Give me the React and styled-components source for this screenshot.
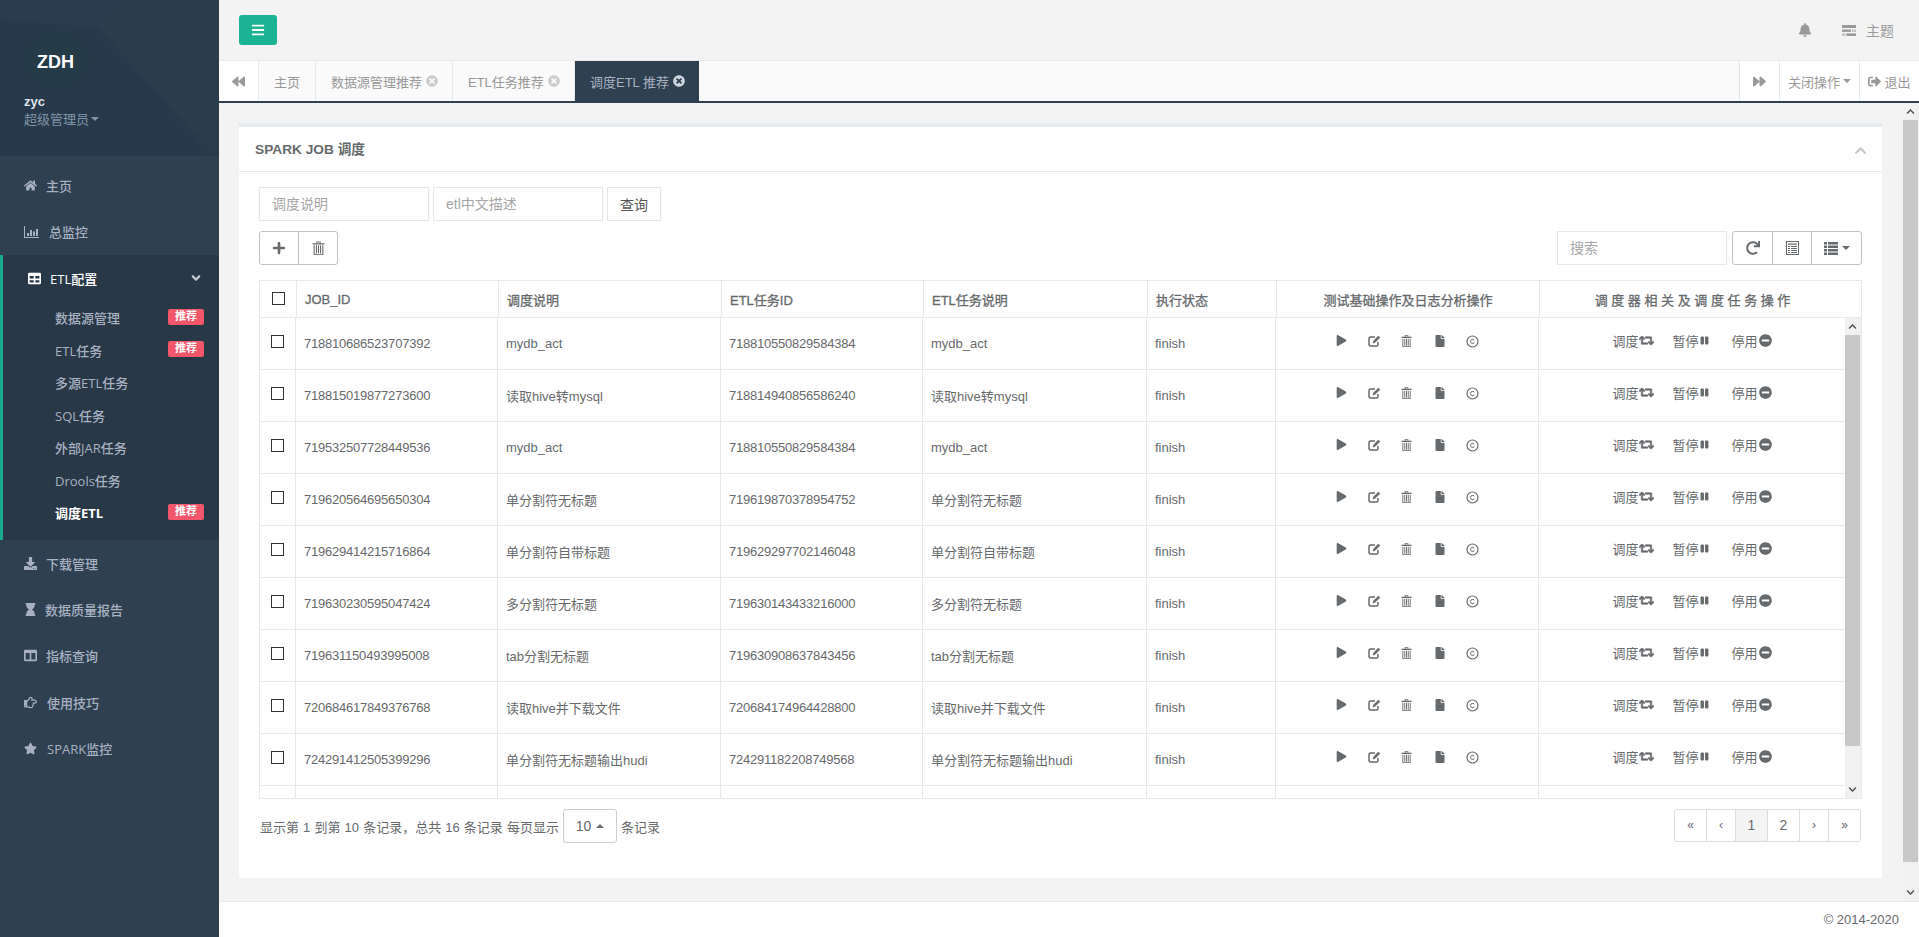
import React from "react";
import styled, { createGlobalStyle } from "styled-components";
import {
  FaBars, FaBackward, FaForward, FaTimesCircle, FaSignOutAlt, FaChevronUp, FaChevronDown, FaPlus, FaRedo,
  FaPlay, FaFile, FaRetweet, FaPause, FaMinusCircle, FaHome, FaTable,
  FaAngleDown, FaDownload, FaHourglass, FaColumns, FaRegHandPointRight, FaStar, FaBell,
} from "react-icons/fa";

const SANS = '"Liberation Sans","Noto Sans CJK SC",sans-serif';
const NAV = '"Open Sans","Noto Sans CJK SC",sans-serif';

const Global = createGlobalStyle`
  html, body { margin: 0; padding: 0; height: 100%; overflow: hidden; }
  body { font-family: ${SANS}; font-size: 13px; color: #676a6c; background: #f3f3f4; }
  * { box-sizing: border-box; }
`;

const Page = styled.div`display: flex; height: 100vh; width: 100vw; overflow: hidden;`;

const Sidebar = styled.nav`
  width: 219px; flex: none; background: #2f4050; color: #a7b1c2;
  font-family: ${NAV}; font-size: 13px; font-weight: 500;
`;
const SideHeader = styled.div`
  position: relative; height: 156px; background: #27394a; overflow: hidden; padding: 46px 0 0 24px;
`;
const SidePattern = styled.svg`position: absolute; inset: 0;`;
const Logo = styled.div`
  position: relative; font-family: ${SANS}; font-weight: 700; font-size: 18px; color: #fff;
  height: 48px; margin-left: 1px; line-height: 32px; padding-left: 12px;
`;
const UserName = styled.div`
  position: relative; font-family: ${SANS}; font-weight: 700; font-size: 13px; color: #dfe4ed; line-height: 16px;
`;
const UserRole = styled.div`
  position: relative; display: flex; align-items: center; gap: 2px; font-weight: 400; font-size: 13px;
  color: #8095a8; line-height: 18px;
`;
const Caret = styled.span`
  display: inline-block; width: 0; height: 0; border-left: 4px solid transparent; border-right: 4px solid transparent;
  ${(p) => (p.$up ? "border-bottom: 4px solid currentColor;" : "border-top: 4px solid currentColor;")}
`;
const Menu = styled.ul`list-style: none; margin: 0; padding: 6.2px 0 0;`;
const MenuItem = styled.li`
  height: 46.4px; display: flex; align-items: center; padding-left: 24px;
`;
const MenuIcon = styled.span`
  display: inline-flex; align-items: center; width: ${(p) => p.$slot}px; font-size: ${(p) => p.$size || 13}px; flex: none;
`;
const Group = styled.li`
  background: #293846; border-left: 3px solid #19aa8d; height: 285px;
`;
const GroupHead = styled.div`
  height: 46.4px; display: flex; align-items: center; padding: 0 18px 0 25px; color: #fff;
  span:nth-child(2) { flex: 1; }
  span:nth-child(3) { color: #c3c9d3; }
`;
const SubList = styled.ul`list-style: none; margin: 0; padding: 0;`;
const SubItem = styled.li`
  height: 32.5px; display: flex; align-items: center; justify-content: space-between;
  padding: 0 15px 0 52px; color: ${(p) => (p.$on ? "#fff" : "#a7b1c2")}; font-weight: ${(p) => (p.$on ? 700 : 500)};
`;
const Badge = styled.span`
  width: 36px; height: 16px; border-radius: 2px; background: #f1566a; color: #fff; font-family: ${SANS};
  font-size: 11px; font-weight: 700; line-height: 15px; text-align: center; margin-top: -2px;
`;

const Main = styled.div`flex: 1; min-width: 0; display: flex; flex-direction: column;`;
const TopBar = styled.header`
  height: 60px; flex: none; background: #f3f3f3; display: flex; align-items: center; justify-content: space-between;
  padding: 0 25px 0 20px; color: #999;
`;
const MenuButton = styled.button`
  width: 38px; height: 30px; border: 0; border-radius: 3px; background: #1ab394; color: #fff; font-size: 14px;
  display: flex; align-items: center; justify-content: center; padding: 0; margin-top: -1px;
`;
const TopRight = styled.div`display: flex; align-items: center; font-size: 14px; color: #999;`;
const Theme = styled.span`display: flex; align-items: center; gap: 10px; margin-left: 30px;`;

const TabRow = styled.div`
  height: 43px; flex: none; display: flex; background: #fafafa; border-top: 1px solid #e7eaec;
  border-bottom: 2px solid #2f4050; color: #999;
`;
const TabNav = styled.div`
  width: ${(p) => p.$w}px; flex: none; display: flex; align-items: center; justify-content: center; gap: 3px;
  background: #fff; font-size: 13px; color: #999;
  ${(p) => (p.$side === "left" ? "border-right: 1px solid #e7eaec;" : "border-left: 1px solid #e7eaec;")}
`;
const Tabs = styled.div`flex: 1; display: flex; min-width: 0;`;
const Tab = styled.div`
  width: ${(p) => p.$w}px; display: flex; align-items: center; gap: 4px; padding-left: 15px; font-size: 13px; flex: none;
  border-right: 1px solid ${(p) => (p.$active ? "#2f4050" : "#e7eaec")};
  background: ${(p) => (p.$active ? "#2f4050" : "transparent")};
  color: ${(p) => (p.$active ? "#a7b1c2" : "#999")};
  svg { font-size: 12px; color: ${(p) => (p.$active ? "#cfd5de" : "#ccc")}; }
`;

const Body = styled.div`flex: 1; min-height: 0; display: flex; background: #f3f3f4;`;
const Content = styled.main`flex: 1; min-width: 0; overflow: hidden; padding: 20px 21px 0 20px;`;
const VBar = styled.div`
  width: 16px; flex: none; display: flex; flex-direction: column; background: #f1f1f1; color: #505050;
`;
const VArrow = styled.span`
  height: 17px; flex: none; display: flex; align-items: center; justify-content: center; font-size: 9px; padding-right: 1px;
`;
const VTrack = styled.div`flex: 1; min-height: 0;`;
const VThumb = styled.div`height: ${(p) => p.$h}px; width: 15px; background: #c8c8c8;`;
const Scrollbar = ({ thumb }) => (
  <VBar>
    <VArrow><FaChevronUp /></VArrow>
    <VTrack><VThumb $h={thumb} /></VTrack>
    <VArrow><FaChevronDown /></VArrow>
  </VBar>
);

const Ibox = styled.section`background: #fff; border-top: 4px solid #e7eaec;`;
const IboxHead = styled.div`
  height: 45px; display: flex; align-items: center; justify-content: space-between; padding: 2px 15px 0 16px;
  border-bottom: 1px solid #e7eaec; color: #c4c6c8; font-size: 13px;
`;
const IboxTitle = styled.h5`margin: -4px 0 0; font-size: 13.7px; font-weight: 700; color: #676a6c;`;
const IboxBody = styled.div`padding: 15px 20px 35px;`;
const SearchRow = styled.form`display: flex; gap: 4px;`;
const TextInput = styled.input`
  width: 170px; height: 34px; border: 1px solid #e5e6e7; padding: 0 12px; font-family: ${SANS}; font-size: 14px; outline: 0;
  background: #fff; &::placeholder { color: #a6a6a6; opacity: 1; }
`;
const QueryButton = styled.button`
  width: 54px; height: 34px; background: #fff; border: 1px solid #e5e6e7; font-family: ${SANS}; font-size: 14px; color: #555; padding: 0;
`;
const Toolbar = styled.div`display: flex; justify-content: space-between; margin-top: 10px;`;
const ToolGroup = styled.div`display: flex; gap: 5px;`;
const BtnGroup = styled.div`
  display: flex; height: 34px; border: 1px solid #c2c2c2; border-radius: 3px; color: #676a6c;
`;
const GroupBtn = styled.button`
  width: ${(p) => p.$w}px; border: 0; background: transparent; padding: 0; color: inherit; display: flex;
  align-items: center; justify-content: center; gap: 4px; font-size: 14px;
  & + & { border-left: 1px solid #c2c2c2; }
`;

const TableBox = styled.div`margin-top: 15px; border: 1px solid #e7eaec; width: 1603px;`;
const HeadTable = styled.table`
  width: 1601px; table-layout: fixed; border-collapse: separate; border-spacing: 0;
`;
const BodyPane = styled.div`height: 480px; display: flex; overflow: hidden;`;
const BodyTable = styled.table`
  width: 1585px; flex: none; align-self: flex-start; table-layout: fixed; border-collapse: separate; border-spacing: 0;
`;
const Col = styled.col`width: ${(p) => p.$w}px;`;
const Th = styled.th`
  height: 37px; padding: 0 8px; border-bottom: 1px solid #e7eaec; border-right: 1px solid #e7eaec; font-weight: 400;
  -webkit-text-stroke: 0.3px #676a6c; font-size: 13px; color: #676a6c; text-align: ${(p) => p.$align || "left"};
  &:last-child { border-right: 0; padding-right: 24px; }
`;
const Td = styled.td`
  height: 52px; padding: 0 8px; border-bottom: 1px solid #e7eaec; border-right: 1px solid #e7eaec; font-size: 13px; color: #676a6c;
  &:last-child { border-right: 0; }
  ${(p) => p.$num && "letter-spacing: -0.22px;"}
`;
const StubTd = styled.td`
  height: 12px; padding: 0; border-right: 1px solid #e7eaec;
  &:last-child { border-right: 0; }
`;
const CheckCell = styled(Td)`padding: 0 0 4px; text-align: center;`;
const CheckHead = styled(Th)`padding: 0 0 1px; text-align: center;`;
const Check = styled.input.attrs({ type: "checkbox" })`
  appearance: none; width: 13px; height: 13px; border: 1px solid #333; background: #fff; display: block; margin: 0 auto;
`;
const IconRow = styled.div`display: flex; justify-content: center; padding-bottom: 4px; color: #676a6c;`;
const IconSlot = styled.span`width: 32.8px; display: flex; justify-content: center; font-size: ${(p) => p.$size || 12}px;`;
const OpRow = styled.div`display: flex; justify-content: center; padding-bottom: 7px;`;
const Op = styled.span`
  display: inline-flex; align-items: center; gap: 1px; margin-left: ${(p) => p.$ml || 0}px; font-size: 13px;
  svg { font-size: ${(p) => p.$size || 12}px; ${(p) => p.$bold && "stroke: currentColor; stroke-width: 24;"} }
`;
const Foot = styled.div`display: flex; justify-content: space-between; margin-top: 10px;`;
const FootInfo = styled.div`display: flex; align-items: center; gap: 4px; font-size: 13px; padding-left: 1px; word-spacing: 0.5px;`;
const PageSize = styled.button`
  width: 54px; height: 34px; background: #fff; border: 1px solid #ccc; border-radius: 3px; color: #676a6c; font-family: ${SANS};
  font-size: 14px; display: flex; align-items: center; justify-content: center; gap: 5px; padding: 0;
`;
const Pager = styled.div`
  display: flex; height: 33px; border: 1px solid #ddd; border-radius: 3px; margin-right: 1px;
`;
const PageCell = styled.span`
  width: ${(p) => p.$w}px; display: flex; align-items: center; justify-content: center; font-size: ${(p) => (p.$small ? 12 : 14)}px;
  background: ${(p) => (p.$on ? "#f4f4f4" : "transparent")}; color: #676a6c; padding-bottom: 2px;
  & + & { border-left: 1px solid #ddd; }
`;
const Footer = styled.footer`
  height: 36px; flex: none; background: #fff; border-top: 1px solid #e7eaec; display: flex; align-items: center;
  justify-content: flex-end; padding: 0 20px 0 0; font-size: 13px; color: #676a6c;
`;

const TrashIcon = ({ size = 13 }) => (
  <svg width={size} height={size * 1.1} viewBox="0 0 12 13.2" fill="currentColor" aria-hidden="true">
    <path d="M4 2V.4h4V2h3.5v1.2H.5V2zM5 1.2V2h2v-.8z" />
    <path d="M1.5 4h1v8.2h7V4h1v9.2h-9z" />
    <path d="M3.6 4h1v7.6h-1zM5.5 4h1v7.6h-1zM7.4 4h1v7.6h-1z" />
  </svg>
);
const ListAltIcon = () => (
  <svg width="13" height="14" viewBox="0 0 13 14" fill="currentColor" aria-hidden="true">
    <path d="M0 0h13v14H0zM1 1v12h11V1z" />
    <path d="M2 2.5h9v1.2H2zM2 5h2v1H2zM5 5h6v1H5zM2 7h2v1H2zM5 7h6v1H5zM2 9h2v1H2zM5 9h6v1H5zM2 11h2v1H2zM5 11h6v1H5z" />
  </svg>
);
const ThListIcon = () => (
  <svg width="14" height="13" viewBox="0 0 14 13" fill="currentColor" aria-hidden="true">
    <path d="M0 0h3v2.4H0zM4 0h10v2.4H4zM0 3.5h3v2.4H0zM4 3.5h10v2.4H4zM0 7h3v2.4H0zM4 7h10v2.4H4zM0 10.5h3V13H0zM4 10.5h10V13H4z" />
  </svg>
);
const ChartIcon = () => (
  <svg width="15" height="12" viewBox="0 0 15 12" fill="currentColor" aria-hidden="true">
    <path d="M0 0h1v11h14v1H0z" />
    <path d="M3 7h2v3H3zM6 4h2v6H6zM9 5.5h2V10H9zM12 3h2v7h-2z" />
  </svg>
);
const ThemeIcon = () => (
  <svg width="14" height="11" viewBox="0 0 14 11" fill="currentColor" aria-hidden="true">
    <path d="M0 0h14v3H0z" />
    <path d="M0 4.5h9v2.4H0z" /><path d="M10 4.5h4v2.4h-4z" opacity=".55" />
    <path d="M0 8.4h3.5V11H0z" opacity=".55" /><path d="M4.5 8.4H14V11H4.5z" />
  </svg>
);
const EditIcon = () => (
  <svg width="13" height="12" viewBox="0 0 13 12" fill="none" stroke="currentColor" aria-hidden="true">
    <path d="M10 7v2.5a1.5 1.5 0 0 1-1.5 1.5h-6A1.5 1.5 0 0 1 1 9.500v-6A1.500 1.500 0 0 1 2.500 2H7" strokeWidth="1.500" />
    <path d="M5 8l.4-2 5-5 1.600 1.600-5 5z" fill="currentColor" strokeWidth=".5" />
  </svg>
);
const CopyIcon = () => (
  <svg width="13" height="13" viewBox="0 0 13 13" fill="none" stroke="currentColor" aria-hidden="true">
    <circle cx="6.500" cy="6.500" r="5.500" strokeWidth="1.200" />
    <path d="M8.300 5.200a2.100 2.100 0 1 0 0 2.600" strokeWidth="1" />
  </svg>
);

const rows = [
  ["718810686523707392", "mydb_act", "718810550829584384", "mydb_act"],
  ["718815019877273600", "读取hive转mysql", "718814940856586240", "读取hive转mysql"],
  ["719532507728449536", "mydb_act", "718810550829584384", "mydb_act"],
  ["719620564695650304", "单分割符无标题", "719619870378954752", "单分割符无标题"],
  ["719629414215716864", "单分割符自带标题", "719629297702146048", "单分割符自带标题"],
  ["719630230595047424", "多分割符无标题", "719630143433216000", "多分割符无标题"],
  ["719631150493995008", "tab分割无标题", "719630908637843456", "tab分割无标题"],
  ["720684617849376768", "读取hive并下载文件", "720684174964428800", "读取hive并下载文件"],
  ["724291412505399296", "单分割符无标题输出hudi", "724291182208749568", "单分割符无标题输出hudi"],
];
const headCols = [37, 202, 223, 202, 224, 129, 263, 321];
const bodyCols = [36, 202, 223, 202, 224, 129, 263, 306];

const subs = [
  ["数据源管理", true], ["ETL任务", true], ["多源ETL任务"], ["SQL任务"], ["外部JAR任务"], ["Drools任务"], ["调度ETL", true, true],
];

export default function App() {
  return (
    <Page>
      <Global />
      <Sidebar>
        <SideHeader>
          <SidePattern width="219" height="156" viewBox="0 0 219 156" aria-hidden="true">
            <polygon points="0,0 120,0 98,28 0,20" fill="#2a3c4d" />
            <polygon points="120,0 219,0 219,115 195,135 98,28" fill="#2a3d4d" />
            <polygon points="195,135 219,115 219,156 205,156" fill="#293c4c" />
            <ellipse cx="57" cy="60" rx="34" ry="28" fill="#253c48" />
          </SidePattern>
          <Logo>ZDH</Logo>
          <UserName>zyc</UserName>
          <UserRole>超级管理员 <Caret /></UserRole>
        </SideHeader>
        <Menu>
          <MenuItem><MenuIcon $slot={22}><FaHome /></MenuIcon>主页</MenuItem>
          <MenuItem><MenuIcon $slot={25}><ChartIcon /></MenuIcon>总监控</MenuItem>
          <Group>
            <GroupHead>
              <MenuIcon $slot={22}><FaTable /></MenuIcon>
              <span>ETL配置</span>
              <MenuIcon $slot={10} $size={14}><FaAngleDown /></MenuIcon>
            </GroupHead>
            <SubList>
              {subs.map(([label, badge, on]) => (
                <SubItem key={label} $on={on}>
                  <span>{label}</span>
                  {badge && <Badge>推荐</Badge>}
                </SubItem>
              ))}
            </SubList>
          </Group>
          <MenuItem><MenuIcon $slot={22}><FaDownload /></MenuIcon>下载管理</MenuItem>
          <MenuItem><MenuIcon $slot={21}><FaHourglass /></MenuIcon>数据质量报告</MenuItem>
          <MenuItem><MenuIcon $slot={22}><FaColumns /></MenuIcon>指标查询</MenuItem>
          <MenuItem><MenuIcon $slot={23}><FaRegHandPointRight /></MenuIcon>使用技巧</MenuItem>
          <MenuItem><MenuIcon $slot={23}><FaStar /></MenuIcon>SPARK监控</MenuItem>
        </Menu>
      </Sidebar>
      <Main>
        <TopBar>
          <MenuButton aria-label="menu"><FaBars /></MenuButton>
          <TopRight>
            <FaBell />
            <Theme><ThemeIcon />主题</Theme>
          </TopRight>
        </TopBar>
        <TabRow>
          <TabNav $w={40} $side="left"><FaBackward /></TabNav>
          <Tabs>
            <Tab $w={57}>主页</Tab>
            <Tab $w={137}>数据源管理推荐<FaTimesCircle /></Tab>
            <Tab $w={122}>ETL任务推荐<FaTimesCircle /></Tab>
            <Tab $w={124} $active>调度ETL 推荐<FaTimesCircle /></Tab>
          </Tabs>
          <TabNav $w={40}><FaForward /></TabNav>
          <TabNav $w={80}>关闭操作<Caret /></TabNav>
          <TabNav $w={60}><FaSignOutAlt />退出</TabNav>
        </TabRow>
        <Body>
          <Content>
            <Ibox>
              <IboxHead>
                <IboxTitle>SPARK JOB 调度</IboxTitle>
                <FaChevronUp />
              </IboxHead>
              <IboxBody>
                <SearchRow>
                  <TextInput placeholder="调度说明" />
                  <TextInput placeholder="etl中文描述" />
                  <QueryButton type="button">查询</QueryButton>
                </SearchRow>
                <Toolbar>
                  <BtnGroup>
                    <GroupBtn $w={38}><FaPlus /></GroupBtn>
                    <GroupBtn $w={39}><TrashIcon size={13} /></GroupBtn>
                  </BtnGroup>
                  <ToolGroup>
                    <TextInput placeholder="搜索" />
                    <BtnGroup>
                      <GroupBtn $w={39}><FaRedo /></GroupBtn>
                      <GroupBtn $w={39}><ListAltIcon /></GroupBtn>
                      <GroupBtn $w={50}><ThListIcon /><Caret /></GroupBtn>
                    </BtnGroup>
                  </ToolGroup>
                </Toolbar>
                <TableBox>
                  <HeadTable>
                    <colgroup>{headCols.map((w, i) => <Col key={i} $w={w} />)}</colgroup>
                    <thead>
                      <tr>
                        <CheckHead><Check /></CheckHead>
                        <Th>JOB_ID</Th>
                        <Th>调度说明</Th>
                        <Th>ETL任务ID</Th>
                        <Th>ETL任务说明</Th>
                        <Th>执行状态</Th>
                        <Th $align="center">测试基础操作及日志分析操作</Th>
                        <Th $align="center">调 度 器 相 关 及 调 度 任 务 操 作</Th>
                      </tr>
                    </thead>
                  </HeadTable>
                  <BodyPane>
                    <BodyTable>
                      <colgroup>{bodyCols.map((w, i) => <Col key={i} $w={w} />)}</colgroup>
                      <tbody>
                        {rows.map((r) => (
                          <tr key={r[0]}>
                            <CheckCell><Check /></CheckCell>
                            <Td $num>{r[0]}</Td>
                            <Td>{r[1]}</Td>
                            <Td $num>{r[2]}</Td>
                            <Td>{r[3]}</Td>
                            <Td>finish</Td>
                            <Td>
                              <IconRow>
                                <IconSlot $size={11}><FaPlay /></IconSlot>
                                <IconSlot><EditIcon /></IconSlot>
                                <IconSlot><TrashIcon size={11} /></IconSlot>
                                <IconSlot><FaFile /></IconSlot>
                                <IconSlot><CopyIcon /></IconSlot>
                              </IconRow>
                            </Td>
                            <Td>
                              <OpRow>
                                <Op $size={15} $bold>调度<FaRetweet /></Op>
                                <Op $ml={18} $size={9}>暂停<FaPause /></Op>
                                <Op $ml={23} $size={13}>停用<FaMinusCircle /></Op>
                              </OpRow>
                            </Td>
                          </tr>
                        ))}
                        <tr>{bodyCols.map((w, i) => <StubTd key={i} />)}</tr>
                      </tbody>
                    </BodyTable>
                    <Scrollbar thumb={411} />
                  </BodyPane>
                </TableBox>
                <Foot>
                  <FootInfo>
                    显示第 1 到第 10 条记录，总共 16 条记录 每页显示
                    <PageSize>10 <Caret $up /></PageSize>
                    条记录
                  </FootInfo>
                  <Pager>
                    <PageCell $w={31} $small>«</PageCell>
                    <PageCell $w={29} $small>‹</PageCell>
                    <PageCell $w={32} $on>1</PageCell>
                    <PageCell $w={32}>2</PageCell>
                    <PageCell $w={29} $small>›</PageCell>
                    <PageCell $w={32} $small>»</PageCell>
                  </Pager>
                </Foot>
              </IboxBody>
            </Ibox>
          </Content>
          <Scrollbar thumb={742} />
        </Body>
        <Footer>© 2014-2020</Footer>
      </Main>
    </Page>
  );
}
